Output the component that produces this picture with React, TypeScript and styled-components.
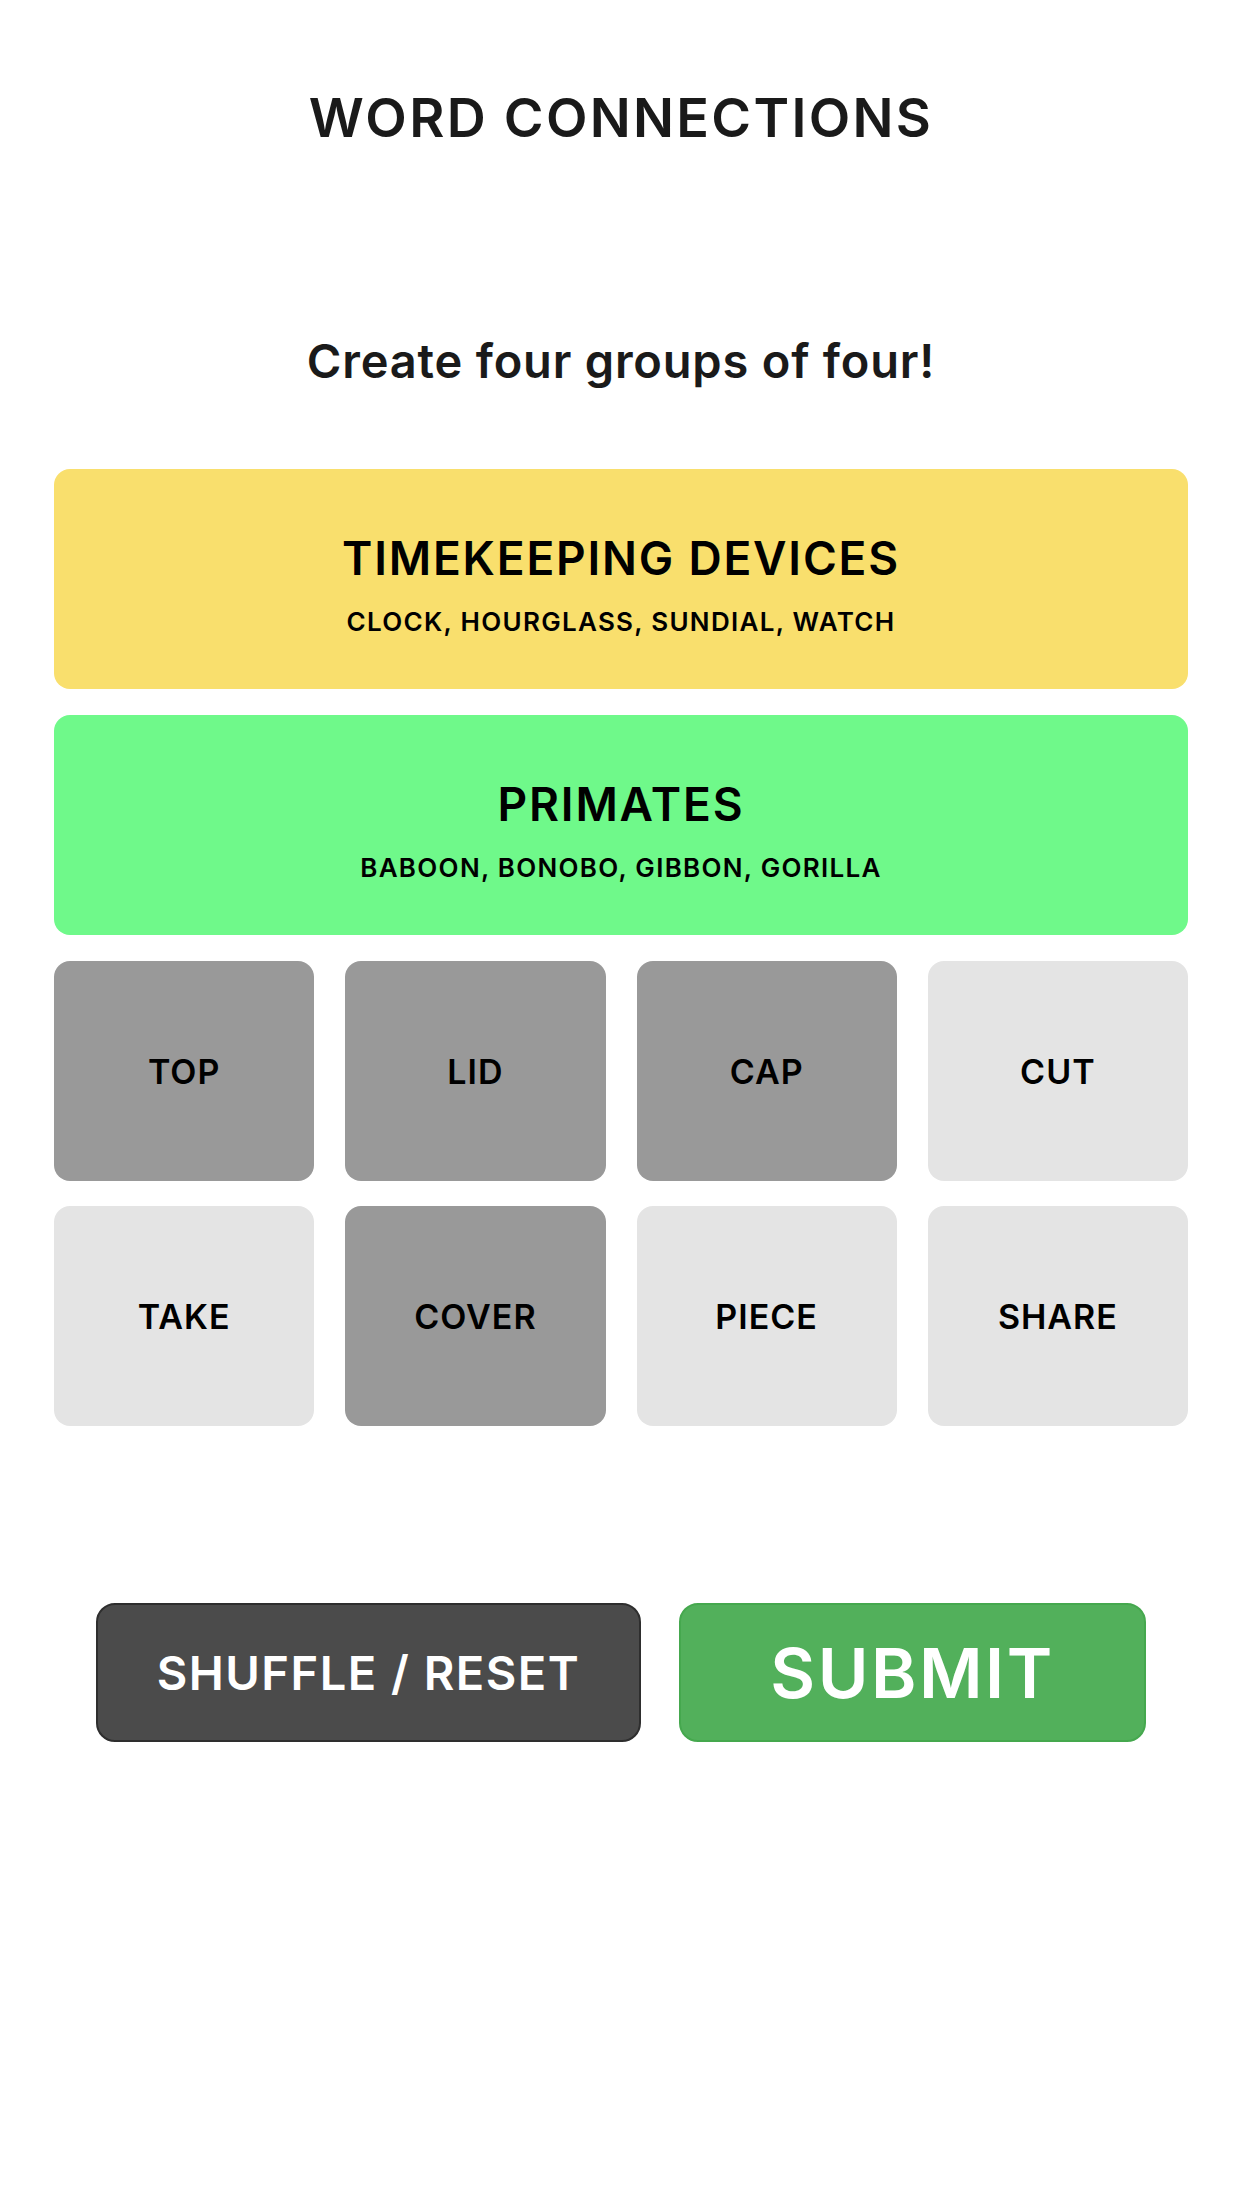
import styled, { createGlobalStyle } from "styled-components"

type Group = {
  title: string
  words: string[]
  color: string
}

type Word = {
  label: string
  selected: boolean
}

const solved: Group[] = [
  {
    title: "TIMEKEEPING DEVICES",
    words: ["CLOCK", "HOURGLASS", "SUNDIAL", "WATCH"],
    color: "#f9df6d",
  },
  {
    title: "PRIMATES",
    words: ["BABOON", "BONOBO", "GIBBON", "GORILLA"],
    color: "#6ff98a",
  },
]

const board: Word[] = [
  { label: "TOP", selected: true },
  { label: "LID", selected: true },
  { label: "CAP", selected: true },
  { label: "CUT", selected: false },
  { label: "TAKE", selected: false },
  { label: "COVER", selected: true },
  { label: "PIECE", selected: false },
  { label: "SHARE", selected: false },
]

const GlobalStyle = createGlobalStyle`
  html, body {
    margin: 0;
    padding: 0;
    background: #fff;
  }

  body {
    font-family: Inter, "Noto Sans", sans-serif;
    -webkit-font-smoothing: antialiased;
  }
`

const SolvedCard = ({ group }: { group: Group }) => (
  <Card $bg={group.color}>
    <CardTitle>{group.title}</CardTitle>
    <CardWords>{group.words.join(", ")}</CardWords>
  </Card>
)

export default function App() {
  return (
    <Page>
      <GlobalStyle />
      <Title>WORD CONNECTIONS</Title>
      <Subtitle>Create four groups of four!</Subtitle>

      <Board>
        {solved.map((group) => (
          <SolvedCard key={group.title} group={group} />
        ))}

        <Grid>
          {board.map((word) => (
            <Tile key={word.label} $selected={word.selected}>
              {word.label}
            </Tile>
          ))}
        </Grid>
      </Board>

      <Actions>
        <ShuffleButton>SHUFFLE / RESET</ShuffleButton>
        <SubmitButton>SUBMIT</SubmitButton>
      </Actions>
    </Page>
  )
}

const Page = styled.main`
  width: 1242px;
  min-height: 2208px;
  box-sizing: border-box;
  padding: 0 54px;
  display: flex;
  flex-direction: column;
  align-items: center;
  color: #1a1a1a;
`

const Title = styled.h1`
  margin: 91px 0 0;
  font-size: 54px;
  line-height: 54px;
  font-weight: 600;
  letter-spacing: 2.3px;
  color: #1a1a1a;
`

const Subtitle = styled.p`
  margin: 192px 0 0;
  font-size: 47px;
  line-height: 47px;
  font-weight: 600;
  letter-spacing: 0.8px;
  color: #1a1a1a;
`

const Board = styled.section`
  margin-top: 85px;
  width: 100%;
  display: flex;
  flex-direction: column;
  gap: 26px;
`

const Card = styled.div<{ $bg: string }>`
  height: 220px;
  box-sizing: border-box;
  padding-top: 66px;
  border-radius: 16px;
  background: ${(p) => p.$bg};
  display: flex;
  flex-direction: column;
  align-items: center;
  gap: 28px;
  color: #000;
`

const CardTitle = styled.div`
  font-size: 46px;
  line-height: 46px;
  font-weight: 600;
  letter-spacing: 1.8px;
`

const CardWords = styled.div`
  font-size: 26px;
  line-height: 26px;
  font-weight: 600;
  letter-spacing: 1.3px;
`

const Grid = styled.div`
  display: grid;
  grid-template-columns: repeat(4, 1fr);
  column-gap: 31px;
  row-gap: 25px;
`

const Tile = styled.div<{ $selected: boolean }>`
  height: 220px;
  border-radius: 16px;
  background: ${(p) => (p.$selected ? "#999999" : "#e4e4e4")};
  display: flex;
  align-items: center;
  justify-content: center;
  font-size: 34px;
  font-weight: 600;
  letter-spacing: 1px;
  color: #000;
`

const Actions = styled.div`
  margin-top: 177px;
  display: flex;
  gap: 38px;
`

const ActionButton = styled.button`
  height: 139px;
  box-sizing: border-box;
  border-radius: 19px;
  font-family: inherit;
  color: #fff;
  display: flex;
  align-items: center;
  justify-content: center;
  padding: 0;
  cursor: pointer;
`

const ShuffleButton = styled(ActionButton)`
  width: 545px;
  background: #4b4b4b;
  border: 2px solid #2e2e2e;
  font-size: 47px;
  font-weight: 600;
  letter-spacing: 1.5px;
`

const SubmitButton = styled(ActionButton)`
  width: 467px;
  background: #52b05b;
  border: 2px solid #45a84e;
  font-size: 69px;
  font-weight: 600;
  letter-spacing: 2.5px;
`
